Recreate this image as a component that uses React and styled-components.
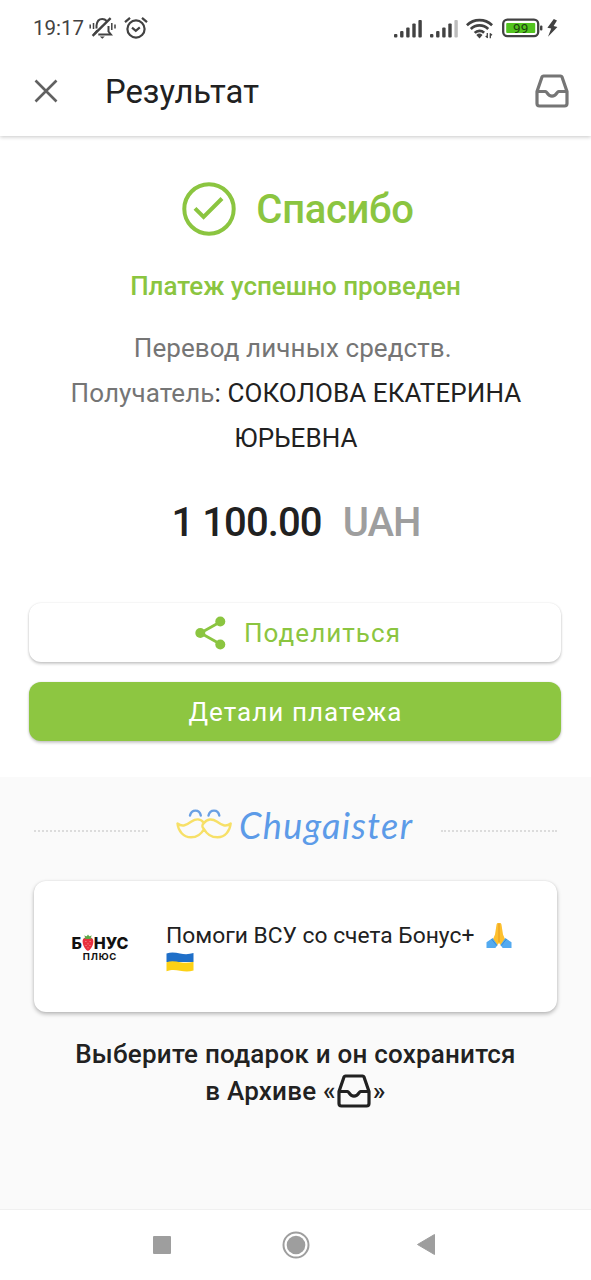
import React from 'react'
import styled, { createGlobalStyle } from 'styled-components'

const GlobalStyle = createGlobalStyle`
  * {
    box-sizing: border-box;
  }
  body {
    margin: 0;
    background: #fff;
    font-family: Roboto, 'Noto Sans', sans-serif;
    color: #212121;
  }
  svg {
    display: block;
    flex: none;
  }
`

const Screen = styled.div`
  width: 591px;
  height: 1280px;
  display: flex;
  flex-flow: column nowrap;
  overflow: hidden;
  background: #fff;
`

const StatusBar = styled.div`
  flex: 0 0 56px;
  display: flex;
  align-items: center;
  padding: 0 33px;
  color: #424242;
`

const Clock = styled.span`
  font-size: 20.5px;
  line-height: 24px;
`

const StatusLeft = styled.div`
  display: flex;
  align-items: center;
  gap: 5px;
  margin-right: 8px;
`

const StatusRight = styled.div`
  display: flex;
  align-items: center;
  gap: 8px;
  margin-left: auto;
`

const Power = styled.div`
  display: flex;
  align-items: center;
  gap: 4px;
  margin-left: 1px;
`

const Header = styled.header`
  flex: 0 0 80px;
  display: flex;
  align-items: center;
  padding: 0 22px 11px 34px;
  box-shadow: 0 1px 4px rgba(0, 0, 0, 0.22);
  clip-path: inset(0 0 -8px 0);
`

const HeaderTitle = styled.h1`
  flex: 1 0 0px;
  margin: 3px 0 0 47px;
  font-size: 32.8px;
  font-weight: 400;
  line-height: 40px;
`

const Result = styled.section`
  flex: 0 0 641px;
  display: flex;
  flex-flow: column nowrap;
  align-items: center;
  padding: 44px 30px 0 29px;
`

const Thanks = styled.div`
  display: flex;
  align-items: center;
  gap: 20px;
  height: 58px;
  padding-left: 6px;
  color: #8bc540;
  font-size: 40px;
  font-weight: 500;
  letter-spacing: -0.3px;
`

const ThanksText = styled.span`
  margin-top: 1px;
`

const Success = styled.div`
  margin-top: 32px;
  padding-left: 1px;
  font-size: 26px;
  line-height: 32px;
  font-weight: 500;
  color: #8bc540;
`

const Purpose = styled.div`
  margin-top: 24px;
  padding-left: 2px;
  font-size: 26px;
  line-height: 45px;
  letter-spacing: 0.09px;
  text-align: center;
`

const Muted = styled.span`
  color: #757575;
`

const Amount = styled.div`
  display: flex;
  gap: 21px;
  margin-top: 38px;
  padding-left: 2px;
  font-size: 40px;
  line-height: 48px;
  font-weight: 500;
  letter-spacing: -0.9px;
`

const Currency = styled.span`
  color: #9e9e9e;
`

const Button = styled.button`
  display: flex;
  align-items: center;
  justify-content: center;
  gap: 18px;
  width: 532px;
  height: 59px;
  flex: none;
  margin-top: ${p => p.$top};
  padding: 0 0 0 ${p => (p.$primary ? '1px' : '6px')};
  border: 0;
  border-radius: 12px;
  font-family: inherit;
  font-size: 26px;
  letter-spacing: 1.05px;
  color: ${p => (p.$primary ? '#fff' : '#8bc540')};
  background: ${p => (p.$primary ? '#8dc641' : '#fff')};
  box-shadow: 0 2px 3px rgba(0, 0, 0, 0.2), 0 0 2px rgba(0, 0, 0, 0.12);
`

const Gifts = styled.section`
  flex: 0 0 433px;
  display: flex;
  flex-flow: column nowrap;
  align-items: center;
  padding: 0 34px;
  background: #fafafa;
  border-bottom: 1px solid #f0f0f0;
`

const BrandRow = styled.div`
  display: flex;
  align-items: center;
  justify-content: space-between;
  width: 100%;
  height: 104px;
`

const Dots = styled.div`
  width: ${p => p.$width};
  margin-top: 4px;
  border-top: 2px dotted #dcdcdc;
`

const Card = styled.div`
  display: flex;
  align-items: flex-start;
  width: 523px;
  height: 131px;
  border-radius: 12px;
  padding: 40px 40px 0 37px;
  background: #fff;
  box-shadow: 0 2px 4px rgba(0, 0, 0, 0.28), 0 0 2px rgba(0, 0, 0, 0.08);
`

const BonusLogo = styled.div`
  flex: 0 0 58px;
  margin: 13px 37px 0 0;
  display: flex;
  flex-flow: column nowrap;
  align-items: center;
  font-family: Inter, sans-serif;
  color: #111;
`

const BonusTop = styled.div`
  display: flex;
  align-items: center;
  height: 18px;
  font-size: 16px;
  font-weight: 800;
  line-height: 18px;
`

const BonusBottom = styled.div`
  font-size: 9.5px;
  line-height: 10px;
  font-weight: 700;
  letter-spacing: 0.8px;
`

const CardText = styled.div`
  font-size: 22.8px;
`

const CardLine = styled.div`
  display: flex;
  align-items: center;
  gap: 12px;
  height: ${p => p.$height};
  white-space: nowrap;
`

const Hint = styled.p`
  margin: 24px 0 0;
  font-size: 26px;
  font-weight: 500;
  line-height: 37px;
  letter-spacing: 0.22px;
  text-align: center;
`

const HintLine = styled.span`
  display: flex;
  justify-content: center;
  align-items: center;
  height: 37px;
  white-space: nowrap;
`

const ArchiveIcon = styled.span`
  margin: 0 2px 2px 1px;
`

const NavBar = styled.nav`
  flex: 0 0 70px;
  display: flex;
  align-items: center;
  justify-content: space-between;
  padding: 0 156px 1px 153px;
`

const HomeButton = styled.span`
  margin-left: 3px;
`

const BellOff = () => (
  <svg width='27' height='24' viewBox='0 0 27 24' fill='none' stroke='#424242' strokeWidth='2'>
    <path d='M7.500 12.500V9.500C8 4.500 10.500 3 13.300 3c1.800 0 3.200.7 4.400 2M19.500 10v5.500l2.400 3H9.300M8.300 14.500L5 18.400' />
    <path d='M21.600 2.200L3.600 19.800' strokeWidth='2.4' />
    <path d='M10.800 20.500h5l-2.500 2.300z' fill='#424242' stroke='none' />
    <path d='M1.200 8.500v4M4.500 7v6M22.800 7v7M26 8.500v4' strokeWidth='1.5' />
  </svg>
)

const Alarm = () => (
  <svg width='24' height='24' viewBox='0 0 24 24' fill='none' stroke='#424242' strokeWidth='2.2'>
    <circle cx='12' cy='13' r='8.6' />
    <path d='M8 11.6l3.800 3.200 4-3.400' />
    <path d='M1 6.200l5-4.400M23 6.200l-5-4.400' />
  </svg>
)

const Signal = ({ weak }) => (
  <svg width='28' height='19' viewBox='0 0 28 19' fill='#424242'>
    <rect x='0' y='15' width='3.4' height='3.5' rx='1' />
    <rect x='6.1' y='12' width='3.4' height='6.5' rx='1' />
    <rect x='12.2' y='8.5' width='3.4' height='10' rx='1' />
    <rect x='18.3' y='4.5' width='3.4' height='14' rx='1' />
    <rect x='24.4' y='1' width='3.4' height='17.5' rx='1' fill={weak ? '#bdbdbd' : '#424242'} />
  </svg>
)

const Wifi = () => (
  <svg width='27' height='21' viewBox='0 0 27 21' fill='none' stroke='#424242' strokeWidth='2.7'>
    <path d='M0.9 7.2a18.200 18.200 0 0 1 25.200 0' />
    <path d='M4.800 11a12.400 12.400 0 0 1 17.400 0' />
    <path d='M8.700 14.900a6.800 6.800 0 0 1 9.400-.2' />
    <path d='M10.300 17l3.200 3.500 3-3.500a4.600 4.600 0 0 0-6.200 0z' fill='#424242' stroke='none' />
    <path d='M21.300 15v5M21.700 19.800l-2-1.800M24.300 20.200v-5M24 15.500l2 1.800' strokeWidth='1.3' />
  </svg>
)

const Battery = () => (
  <svg width='41' height='20' viewBox='0 0 41 20'>
    <rect x='1.2' y='1.6' width='35' height='16.6' rx='4.2' fill='#fff' stroke='#424242' strokeWidth='2.3' />
    <rect x='4.2' y='5' width='29' height='10' rx='1' fill='#52c41f' />
    <text x='18.700' y='14.7' fontFamily='Roboto' fontSize='13.5' fontWeight='400' textAnchor='middle' fill='#1c4110'>
      99
    </text>
    <rect x='38' y='7.4' width='2.400' height='5' rx='1' fill='#424242' />
  </svg>
)

const Bolt = () => (
  <svg width='11' height='18' viewBox='0 0 11 18' fill='#424242'>
    <path d='M6.800 0L0.400 8.800l3.800.8L1 17.800 10.400 8l-3.800-.9L10 1.500z' />
  </svg>
)

const CloseIcon = () => (
  <svg width='24' height='24' viewBox='0 0 24 24' stroke='#616161' strokeWidth='2.6'>
    <path d='M1.500 1.500l21 21M22.500 1.500l-21 21' />
  </svg>
)

const Inbox = ({ color }) => (
  <svg width='34' height='34' viewBox='0 0 34 34' fill='none' stroke={color} strokeWidth='3.2' strokeLinejoin='round'>
    <path d='M8.500 2h17a1.800 1.800 0 0 1 1.500 1L32 17.500v12a2.500 2.500 0 0 1-2.500 2.500h-25A2.500 2.500 0 0 1 2 29.500V17.500L7 3a1.800 1.800 0 0 1 1.500-1z' />
    <path d='M2 17.500h8.500c1.600 0 2 4.700 6.500 4.700s5-4.700 6.500-4.700H32' />
  </svg>
)

const CheckCircle = () => (
  <svg width='54' height='54' viewBox='0 0 54 54' fill='none' stroke='#8bc540' strokeWidth='4'>
    <circle cx='27' cy='27' r='24.700' />
    <path d='M13 26.300l8.600 8.600L40 16.500' />
  </svg>
)

const Share = () => (
  <svg width='31' height='34' viewBox='0 0 31 34' fill='#8bc540'>
    <path d='M26 5.500L5.500 17 26 28.500' fill='none' stroke='#8bc540' strokeWidth='2.800' />
    <circle cx='5.300' cy='17' r='5' />
    <circle cx='25.300' cy='5.500' r='5' />
    <circle cx='25.300' cy='28.500' r='5' />
  </svg>
)

const Brand = () => (
  <svg width='240' height='72' viewBox='0 -8 240 72' fill='none'>
    <g strokeLinecap='round' strokeLinejoin='round' strokeWidth='2.400'>
      <path
        d='M29 22c-3-4.300-8-4.600-12.500-1.500-5 3.500-9 5.800-14 2 .6 7 5.500 13.800 13.500 13.800 6 0 10.500-3.500 13-8.300 2.500 4.800 7.500 8.300 13.500 8.300 8 0 12.500-6.800 13.200-13.800-5 3.800-9 1.500-14-2-4.500-3.100-9.700-2.800-12.700 1.500zm0 0c-2.200 1.500-2.200 4.500 0 6'
        stroke='#f7e067'
      />
      <path d='M15 14.500c1.500-6.500 9.500-6.500 10.800 0M33.500 14.500c1.500-6.500 9.500-6.500 10.800 0' stroke='#6aa0e4' />
    </g>
    <text
      x='64'
      y='38'
      fontFamily='Lato, sans-serif'
      fontSize='36'
      fontStyle='italic'
      fontWeight='400'
      textLength='173'
      fill='#5c9be8'
    >
      Chugaister
    </text>
  </svg>
)

const Strawberry = () => (
  <svg width='12' height='18' viewBox='0 0 12 17'>
    <path d='M6 3C2 2.200.300 4.800.700 8c.5 4 3.300 7.800 5.300 8.500 2-.7 4.800-4.500 5.300-8.500C11.700 4.800 10 2.200 6 3z' fill='#e9303f' />
    <path d='M6 4.500L2 4.200l1.500-1.400L1.800 1l3 .7L6 0l1.200 1.700 3-.7-1.700 1.800L10 4.200z' fill='#5da846' />
    <path d='M3.500 7h.8M7.700 7h.8M5.600 9.300h.8M3.600 11h.8M7.600 11h.8M5.600 13.300h.8' stroke='#ffc4bd' strokeWidth='.9' />
  </svg>
)

const FoldedHands = () => (
  <svg width='26' height='27' viewBox='0 0 26 27'>
    <path d='M12.200 1c-1 0-1.500.6-1.700 1.700L9 12.500l-2.500 5.800c-.4 2 1.500 5.400 4 5.700L13 21l2.500 3c2.500-.3 4.400-3.700 4-5.700L17 12.500l-1.500-9.800C15.300 1.600 14.800 1 13.800 1z' fill='#fdc02f' />
    <path d='M13 1.500V20' stroke='#e69a1d' strokeWidth='1' />
    <path d='M.500 20.300l6.200-4.200 4.900 7-2.300 3H.500zM25.500 20.300l-6.200-4.200-4.900 7 2.300 3h8.800z' fill='#53aaf0' />
    <path d='M5.500 17l5.300 6.500M20.500 17l-5.300 6.500' stroke='#2f87d0' strokeWidth='.8' />
  </svg>
)

const Flag = () => (
  <svg width='28' height='20' viewBox='0 0 28 20'>
    <path d='M.500 1.500c5-1.800 9-.9 13.500 0s9 .9 13.500-.4V10H.500z' fill='#1f6fc8' />
    <path d='M.500 10.200c5-1.600 9-.8 13.500 0s9 .8 13.500-.4v8.700c-5 1.400-9 1-13.500.2s-8.500-1.300-13.500.5z' fill='#fcd116' />
  </svg>
)

export default function App() {
  return (
    <Screen>
      <GlobalStyle />
      <StatusBar>
        <StatusLeft>
          <Clock>19:17</Clock>
          <BellOff />
        </StatusLeft>
        <Alarm />
        <StatusRight>
          <Signal />
          <Signal weak />
          <Wifi />
          <Power>
            <Battery />
            <Bolt />
          </Power>
        </StatusRight>
      </StatusBar>
      <Header>
        <CloseIcon />
        <HeaderTitle>Результат</HeaderTitle>
        <Inbox color='#757575' />
      </Header>
      <Result>
        <Thanks>
          <CheckCircle />
          <ThanksText>Спасибо</ThanksText>
        </Thanks>
        <Success>Платеж успешно проведен</Success>
        <Purpose>
          <Muted>Перевод личных средств.&nbsp;</Muted>
          <br />
          <Muted>Получатель</Muted>: СОКОЛОВА ЕКАТЕРИНА
          <br />
          ЮРЬЕВНА
        </Purpose>
        <Amount>
          <span>1 100.00</span>
          <Currency>UAH</Currency>
        </Amount>
        <Button $top='56px'>
          <Share />
          Поделиться
        </Button>
        <Button $top='20px' $primary>
          Детали платежа
        </Button>
      </Result>
      <Gifts>
        <BrandRow>
          <Dots $width='114px' />
          <Brand />
          <Dots $width='116px' />
        </BrandRow>
        <Card>
          <BonusLogo>
            <BonusTop>
              Б<Strawberry />
              НУС
            </BonusTop>
            <BonusBottom>ПЛЮС</BonusBottom>
          </BonusLogo>
          <CardText>
            <CardLine $height='28px'>
              Помоги ВСУ со счета Бонус+
              <FoldedHands />
            </CardLine>
            <CardLine $height='26px'>
              <Flag />
            </CardLine>
          </CardText>
        </Card>
        <Hint>
          <HintLine>Выберите подарок и он сохранится</HintLine>
          <HintLine>
            в Архиве «
            <ArchiveIcon>
              <Inbox color='#212121' />
            </ArchiveIcon>
            »
          </HintLine>
        </Hint>
      </Gifts>
      <NavBar>
        <svg width='18' height='18' viewBox='0 0 18 18'>
          <rect width='18' height='18' rx='1' fill='#9e9e9e' />
        </svg>
        <HomeButton>
          <svg width='28' height='28' viewBox='0 0 28 28'>
            <circle cx='14' cy='14' r='12.500' fill='none' stroke='#9e9e9e' strokeWidth='2' />
            <circle cx='14' cy='14' r='9.300' fill='#9e9e9e' />
          </svg>
        </HomeButton>
        <svg width='18' height='21' viewBox='0 0 18 21'>
          <path d='M17.500 .500v20L.500 10.500z' fill='#9e9e9e' stroke='#9e9e9e' strokeLinejoin='round' />
        </svg>
      </NavBar>
    </Screen>
  )
}
